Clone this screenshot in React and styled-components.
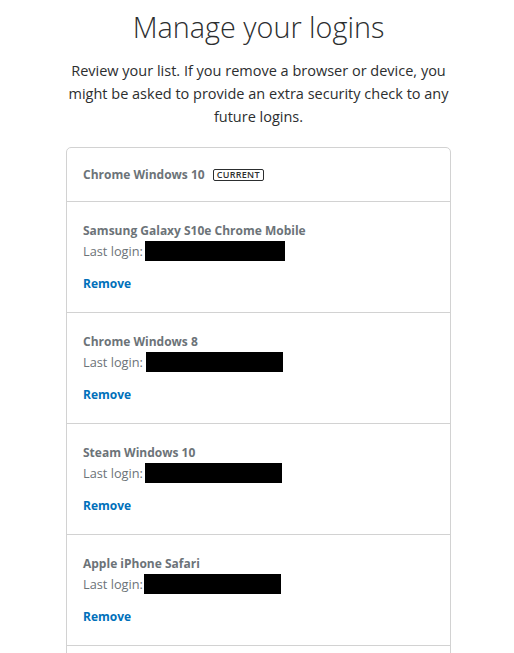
import React from "react";
import styled, { createGlobalStyle } from "styled-components";

const Global = createGlobalStyle`
  html, body { margin: 0; padding: 0; background: #fff; }
  body { font-family: "Open Sans", "Liberation Sans", sans-serif; color: #2c2e2f; }
  * { box-sizing: border-box; }
`;

const Page = styled.main`
  padding: 10px 0 0 3px;
`;

const Inner = styled.div`
  width: 385px;
  margin: 0 auto;
`;

const Title = styled.h1`
  margin: 0;
  font-family: "Open Sans", sans-serif;
  font-weight: 300;
  font-size: 28.8px;
  line-height: 34px;
  text-align: center;
  color: #2c2e2f;
`;

const Intro = styled.p`
  margin: 15px -10px 19px;
  font-size: 14.5px;
  line-height: 23px;
  text-align: center;
  color: #2c2e2f;
`;

const Card = styled.section`
  border: 1px solid #d2d2d2;
  border-radius: 5px;
`;

const Row = styled.div`
  padding: ${(p) => (p.$header ? "18px 16px 17px" : "20px 16px 19px")};
  border-top: ${(p) => (p.$first ? "none" : "1px solid #d2d2d2")};
`;

const DeviceName = styled.div`
  display: flex;
  align-items: center;
  gap: 8px;
  font-family: "Open Sans", sans-serif;
  font-weight: 700;
  font-size: 12px;
  line-height: 18px;
  color: #6c7378;
`;

const Badge = styled.span`
  display: inline-flex;
  align-items: center;
  height: 12px;
  padding: 0 3px;
  border: 1px solid #2c2e2f;
  border-radius: 2px;
  font-size: 9px;
  font-weight: 600;
  letter-spacing: 0.3px;
  color: #2c2e2f;
`;

const LastLogin = styled.div`
  display: flex;
  align-items: center;
  height: 22px;
  font-size: 12.75px;
  color: #6c7378;
`;

const Redacted = styled.span`
  display: inline-block;
  height: 20px;
  margin-left: ${(p) => p.$gap}px;
  background: #000;
`;

const RemoveLink = styled.a`
  display: block;
  margin-top: 13px;
  font-weight: 700;
  font-size: 12px;
  line-height: 18px;
  color: #0070ba;
  text-decoration: none;
  cursor: pointer;
`;

const devices = [
  { name: "Samsung Galaxy S10e Chrome Mobile", w: 140, gap: 2 },
  { name: "Chrome Windows 8", w: 137, gap: 3 },
  { name: "Steam Windows 10", w: 137, gap: 2 },
  { name: "Apple iPhone Safari", w: 137, gap: 1 },
  { name: "Chrome Windows 7", w: 137, gap: 2 },
];

export default function App() {
  return (
    <>
      <Global />
      <Page>
        <Inner>
          <Title>Manage your logins</Title>
          <Intro>
            Review your list. If you remove a browser or device, you might be
            asked to provide an extra security check to any future logins.
          </Intro>
          <Card>
            <Row $header $first>
              <DeviceName>
                Chrome Windows 10 <Badge>CURRENT</Badge>
              </DeviceName>
            </Row>
            {devices.map((d) => (
              <Row key={d.name}>
                <DeviceName>{d.name}</DeviceName>
                <LastLogin>
                  Last login:
                  <Redacted $gap={d.gap} style={{ width: d.w }} />
                </LastLogin>
                <RemoveLink>Remove</RemoveLink>
              </Row>
            ))}
          </Card>
        </Inner>
      </Page>
    </>
  );
}
